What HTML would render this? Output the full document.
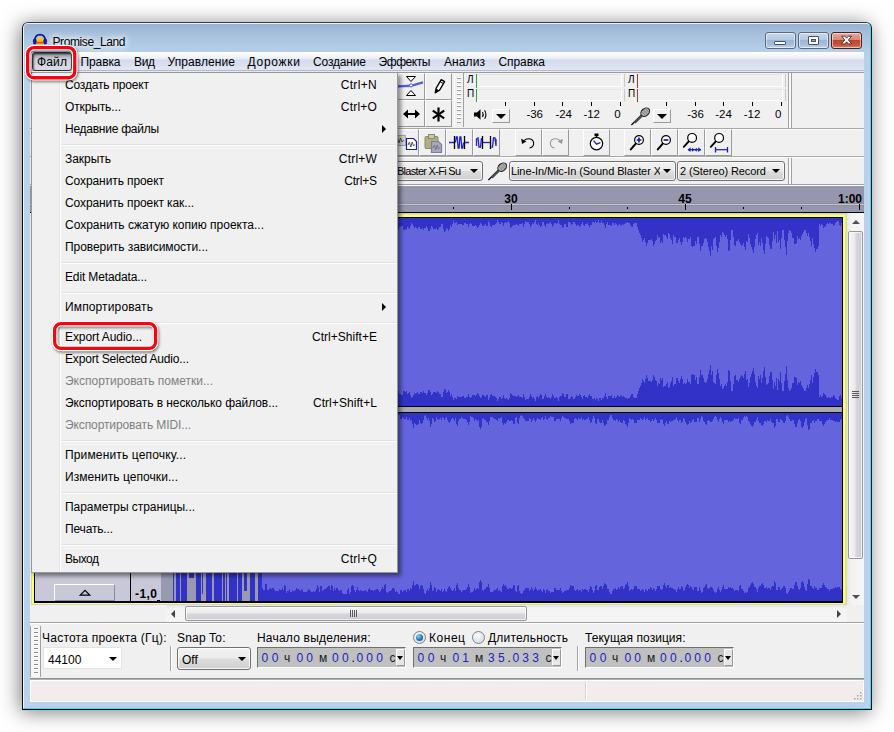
<!DOCTYPE html>
<html lang="ru"><head><meta charset="utf-8"><title>Promise_Land</title>
<style>
html,body{margin:0;padding:0;}
body{width:894px;height:732px;overflow:hidden;background:#fff;position:relative;font-family:"Liberation Sans",sans-serif;font-size:12px;color:#000;}
div,span,svg{position:absolute;box-sizing:border-box;}
.t{white-space:nowrap;}
.win{left:22px;top:22px;width:850px;height:688px;border:1px solid;border-color:#3a3d42 #0c0e12 #000 #0c0e12;border-radius:6px 6px 0 0;
 background:linear-gradient(#97b3d2 0px,#a8c2de 13px,#b7d0e9 29px,#b9d2eb 60px,#b9d2eb 100%);
 box-shadow:-2px 2px 20px 0 rgba(0,0,0,.52);}
.win:before{content:"";position:absolute;left:0;top:0;right:0;bottom:0;border:1px solid;border-color:rgba(255,255,255,.8) #3ad8f6 #3ad8f6 rgba(255,255,255,.8);border-radius:5px 5px 0 0;}
.client{left:30px;top:52px;width:834px;height:650px;background:#f0f0f0;}
.menubar{left:30px;top:52px;width:834px;height:21px;background:linear-gradient(#ffffff 0,#f3f5fb 4px,#e9ecf6 7px,#d5daec 8px,#e2e7f5 18px,#b6bacb 18px,#b6bacb 19px,#ededf1 19px,#ededf1 20px,#9c9c9c 20px);}
.mi{font-size:12px;}
.btn{background:#f0f0f0;border:1px solid;border-color:#fff #9a9a9a #9a9a9a #fff;}
.combo{border:1px solid #707070;border-radius:3px;background:linear-gradient(#f2f2f2,#ebebeb 48%,#dddddd 52%,#cfcfcf);box-shadow:inset 0 0 0 1px rgba(255,255,255,.8);}
.arr{width:0;height:0;border-left:4px solid transparent;border-right:4px solid transparent;border-top:4px solid #000;}
.sm{font-size:11px;}
.menu{background:#f0f0f0;border:1px solid #979797;box-shadow:3px 3px 4px rgba(0,0,0,.45);}
.sep{height:2px;border-top:1px solid #e0e0e0;border-bottom:1px solid #fff;}
.dis{color:#808080;}
.tc{background:#c0c0c0;border:1px solid;border-color:#6e6e6e #fff #fff #6e6e6e;}
.dg{color:#2222c4;font-size:12px;}
.un{color:#1a1a1a;font-size:12px;}
</style></head><body>
<div class="win"></div>
<svg style="left:32px;top:32px" width="16" height="16" viewBox="0 0 16 16">
<defs><linearGradient id="au" x1="0" y1="0" x2="0" y2="1"><stop offset="0" stop-color="#ffe400"/><stop offset=".5" stop-color="#ffb000"/><stop offset=".66" stop-color="#f02800"/><stop offset=".8" stop-color="#ffa800"/><stop offset="1" stop-color="#ffe000"/></linearGradient></defs>
<path d="M4.8 13.5 L4.8 8 Q4.8 6.2 5.8 6.4 Q6.4 4.9 7.2 6.2 Q8 4.6 8.8 6.2 Q9.6 4.9 10.2 6.4 Q11.2 6.2 11.2 8 L11.2 13.5 Z" fill="url(#au)"/>
<path d="M2.5 10 C2.3 4.6 5 2.6 8 2.6 C11 2.6 13.7 4.6 13.5 10" fill="none" stroke="#15158e" stroke-width="1.8"/>
<ellipse cx="2.8" cy="9.5" rx="1.9" ry="3.1" fill="#1a1aa6"/>
<ellipse cx="13.2" cy="9.5" rx="1.9" ry="3.1" fill="#1a1aa6"/>
</svg>
<span id="t1" class="t " style="top:34px;height:16px;line-height:16px;left:52.5px;letter-spacing:-0.399px;font-size:12px;text-shadow:0 0 5px #fff,0 0 8px #fff,0 0 10px rgba(255,255,255,.9);">Promise_Land</span>
<div style="left:765px;top:32px;width:31px;height:17px;border:1px solid #586880;border-radius:3px;background:linear-gradient(#c9d9ec 0,#b4c8e2 45%,#9bb5d6 50%,#a9c1de 80%,#c0d4ea 100%);box-shadow:inset 0 0 0 1px rgba(255,255,255,.55),0 0 1px rgba(255,255,255,.7);"></div>
<div style="left:798px;top:32px;width:31px;height:17px;border:1px solid #586880;border-radius:3px;background:linear-gradient(#c9d9ec 0,#b4c8e2 45%,#9bb5d6 50%,#a9c1de 80%,#c0d4ea 100%);box-shadow:inset 0 0 0 1px rgba(255,255,255,.55),0 0 1px rgba(255,255,255,.7);"></div>
<div style="left:831px;top:32px;width:31px;height:17px;border:1px solid #4a1e1a;border-radius:3px;background:linear-gradient(#e2a99c 0,#d4897a 45%,#c1432b 50%,#c8553a 80%,#d9825f 100%);box-shadow:inset 0 0 0 1px rgba(255,255,255,.55),0 0 1px rgba(255,255,255,.7);"></div>
<div style="left:774px;top:41px;width:12px;height:4px;background:#fff;border:1px solid #47525f;border-radius:1px;"></div>
<div style="left:808px;top:36px;width:11px;height:9px;background:#fff;border:1px solid #47525f;border-radius:1px;"></div>
<div style="left:811px;top:39px;width:5px;height:3px;background:#8ea6c6;border:1px solid #47525f;"></div>
<svg style="left:840px;top:35px" width="14" height="12" viewBox="0 0 14 12"><path d="M1.6 1.2 L4.9 1.2 L6.6 3.2 L8.3 1.2 L11.6 1.2 L8.4 5 L11.8 8.9 L8.4 8.9 L6.6 6.8 L4.8 8.9 L1.4 8.9 L4.8 5 Z" fill="#fff" stroke="#4b2a28" stroke-width="0.9"/></svg>
<div class="client"></div>
<div class="menubar"></div>
<div style="left:32px;top:52px;width:40px;height:19px;border:1px solid #333;border-radius:3px;background:linear-gradient(#77777c 0,#aeafb6 3px,#d0d1da 7px,#dadbe6 100%);box-shadow:inset 1px 1px 2px rgba(0,0,0,.55);"></div>
<span id="t2" class="t mi" style="top:54px;height:16px;line-height:16px;left:37px;letter-spacing:0.161px;">Файл</span>
<span id="t3" class="t mi" style="top:54px;height:16px;line-height:16px;left:80.5px;letter-spacing:-0.109px;">Правка</span>
<span id="t4" class="t mi" style="top:54px;height:16px;line-height:16px;left:134px;letter-spacing:-0.359px;">Вид</span>
<span id="t5" class="t mi" style="top:54px;height:16px;line-height:16px;left:167.5px;letter-spacing:0.087px;">Управление</span>
<span id="t6" class="t mi" style="top:54px;height:16px;line-height:16px;left:247.5px;letter-spacing:0.727px;">Дорожки</span>
<span id="t7" class="t mi" style="top:54px;height:16px;line-height:16px;left:313px;letter-spacing:-0.161px;">Создание</span>
<span id="t8" class="t mi" style="top:54px;height:16px;line-height:16px;left:378.5px;letter-spacing:-0.427px;">Эффекты</span>
<span id="t9" class="t mi" style="top:54px;height:16px;line-height:16px;left:444px;letter-spacing:0.097px;">Анализ</span>
<span id="t10" class="t mi" style="top:54px;height:16px;line-height:16px;left:498.5px;letter-spacing:-0.096px;">Справка</span>
<div class="" style="left:30px;top:128px;width:834px;height:1px;background:#a8a8a8;"></div>
<div class="" style="left:30px;top:129px;width:834px;height:1px;background:#fbfbfb;"></div>
<div class="" style="left:30px;top:156px;width:834px;height:1px;background:#a8a8a8;"></div>
<div class="" style="left:30px;top:157px;width:834px;height:1px;background:#fff;"></div>
<div class="" style="left:30px;top:184px;width:834px;height:1px;background:#a0a0a0;"></div>
<div class="" style="left:30px;top:185px;width:834px;height:1px;background:#fff;"></div>
<div class="btn" style="left:398px;top:73px;width:27px;height:27px;"></div>
<svg style="left:398px;top:73px" width="27" height="27" viewBox="0 0 27 27"><path d="M8.5 3.5 L17.5 3.5 L13 8.5 Z" fill="#fff" stroke="#000" stroke-width="1"/>
<path d="M8.5 22.5 L17.5 22.5 L13 17.5 Z" fill="#fff" stroke="#000" stroke-width="1"/>
<path d="M0 13.4 L13 12.8 L25 9.4" fill="none" stroke="#5a5ae0" stroke-width="2.4"/>
<circle cx="13" cy="12.4" r="1.6" fill="#fff" stroke="#5a5ae0" stroke-width="1"/></svg>
<div class="btn" style="left:425px;top:73px;width:27px;height:27px;"></div>
<svg style="left:425px;top:73px" width="27" height="27" viewBox="0 0 27 27"><path d="M10.2 19.8 L11.2 15.2 L16.2 6.6 L19.6 8.6 L14.6 17.2 Z" fill="#fff" stroke="#000" stroke-width="1.3" stroke-linejoin="round"/>
<path d="M15 8.6 L18.4 10.6" stroke="#000" stroke-width="1.1" fill="none"/>
<path d="M10 20.6 L11.1 15.6 L14.4 17.5 Z" fill="#000"/></svg>
<div class="btn" style="left:398px;top:100px;width:27px;height:27px;"></div>
<svg style="left:398px;top:100px" width="27" height="27" viewBox="0 0 27 27"><path d="M5 14 L10 9.6 L10 12.9 L17 12.9 L17 9.6 L22 14 L17 18.4 L17 15.1 L10 15.1 L10 18.4 Z" fill="#000"/></svg>
<div class="btn" style="left:425px;top:100px;width:27px;height:27px;"></div>
<svg style="left:425px;top:100px" width="27" height="27" viewBox="0 0 27 27"><g stroke="#000" stroke-width="2.2" stroke-linecap="butt"><path d="M13.5 7.5 L13.5 21.5"/><path d="M7.8 10.6 L19.2 18.4"/><path d="M19.2 10.6 L7.8 18.4"/></g></svg>
<div class="" style="left:454px;top:73px;width:1px;height:54px;background:#fff;"></div>
<div class="" style="left:463px;top:73px;width:1px;height:54px;background:#a0a0a0;"></div>
<div class="" style="left:454px;top:73px;width:10px;height:54px;"><div style="left:3px;top:4px;width:4px;height:1px;background:#fff;"></div><div style="left:3px;top:5px;width:4px;height:1px;background:#a0a0a0;"></div><div style="left:3px;top:8px;width:4px;height:1px;background:#fff;"></div><div style="left:3px;top:9px;width:4px;height:1px;background:#a0a0a0;"></div><div style="left:3px;top:12px;width:4px;height:1px;background:#fff;"></div><div style="left:3px;top:13px;width:4px;height:1px;background:#a0a0a0;"></div><div style="left:3px;top:16px;width:4px;height:1px;background:#fff;"></div><div style="left:3px;top:17px;width:4px;height:1px;background:#a0a0a0;"></div><div style="left:3px;top:20px;width:4px;height:1px;background:#fff;"></div><div style="left:3px;top:21px;width:4px;height:1px;background:#a0a0a0;"></div><div style="left:3px;top:24px;width:4px;height:1px;background:#fff;"></div><div style="left:3px;top:25px;width:4px;height:1px;background:#a0a0a0;"></div><div style="left:3px;top:28px;width:4px;height:1px;background:#fff;"></div><div style="left:3px;top:29px;width:4px;height:1px;background:#a0a0a0;"></div><div style="left:3px;top:32px;width:4px;height:1px;background:#fff;"></div><div style="left:3px;top:33px;width:4px;height:1px;background:#a0a0a0;"></div><div style="left:3px;top:36px;width:4px;height:1px;background:#fff;"></div><div style="left:3px;top:37px;width:4px;height:1px;background:#a0a0a0;"></div><div style="left:3px;top:40px;width:4px;height:1px;background:#fff;"></div><div style="left:3px;top:41px;width:4px;height:1px;background:#a0a0a0;"></div><div style="left:3px;top:44px;width:4px;height:1px;background:#fff;"></div><div style="left:3px;top:45px;width:4px;height:1px;background:#a0a0a0;"></div><div style="left:3px;top:48px;width:4px;height:1px;background:#fff;"></div><div style="left:3px;top:49px;width:4px;height:1px;background:#a0a0a0;"></div></div>
<div class="" style="left:476px;top:74px;width:146px;height:13px;background:#f0f0f0;border-bottom:1px solid #fff;border-right:1px solid #fff;border-top:1px solid #e4e4e4;"></div>
<div class="" style="left:476px;top:74px;width:1px;height:14px;background:#30a030;"></div>
<div class="" style="left:624px;top:74px;width:1px;height:13px;background:#c8c8c8;"></div>
<div class="" style="left:476px;top:89px;width:146px;height:12px;background:#f0f0f0;border-bottom:1px solid #fff;border-right:1px solid #fff;border-top:1px solid #e4e4e4;"></div>
<div class="" style="left:476px;top:89px;width:1px;height:13px;background:#30a030;"></div>
<div class="" style="left:624px;top:89px;width:1px;height:12px;background:#c8c8c8;"></div>
<span id="t11" class="t " style="top:72px;height:16px;line-height:16px;left:467px;font-size:10px;">Л</span>
<span id="t12" class="t " style="top:86px;height:16px;line-height:16px;left:467px;font-size:10px;">П</span>
<div class="" style="left:505px;top:102px;width:1px;height:4px;background:#000;"></div>
<div class="" style="left:534px;top:102px;width:1px;height:4px;background:#000;"></div>
<div class="" style="left:562px;top:102px;width:1px;height:4px;background:#000;"></div>
<div class="" style="left:591px;top:102px;width:1px;height:4px;background:#000;"></div>
<div class="" style="left:620px;top:102px;width:1px;height:4px;background:#000;"></div>
<span id="t13" class="t " style="top:106px;height:16px;line-height:16px;left:534.7px;font-size:11.5px;width:40px;margin-left:-20px;text-align:center;">-36</span>
<span id="t14" class="t " style="top:106px;height:16px;line-height:16px;left:563.7px;font-size:11.5px;width:40px;margin-left:-20px;text-align:center;">-24</span>
<span id="t15" class="t " style="top:106px;height:16px;line-height:16px;left:591.7px;font-size:11.5px;width:40px;margin-left:-20px;text-align:center;">-12</span>
<span id="t16" class="t " style="top:106px;height:16px;line-height:16px;left:617.5px;font-size:11.5px;width:40px;margin-left:-20px;text-align:center;">0</span>
<svg style="left:472px;top:107px" width="17" height="15" viewBox="0 0 17 15"><path d="M2 5.5 L5 5.5 L8.5 2.2 L8.5 12.8 L5 9.5 L2 9.5 Z" fill="#000"/><path d="M10.5 5 Q12 7.5 10.5 10" fill="none" stroke="#000" stroke-width="1.1"/><path d="M12.6 3.2 Q15.2 7.5 12.6 11.8" fill="none" stroke="#000" stroke-width="1.1"/></svg>
<div class="btn" style="left:492px;top:109px;width:18px;height:14px;"></div>
<div class="arr" style="left:496px;top:114px;border-left-width:5px;border-right-width:5px;border-top-width:5px;"></div>
<div class="" style="left:637px;top:74px;width:146px;height:13px;background:#f0f0f0;border-bottom:1px solid #fff;border-right:1px solid #fff;border-top:1px solid #e4e4e4;"></div>
<div class="" style="left:637px;top:74px;width:1px;height:14px;background:#b03030;"></div>
<div class="" style="left:785px;top:74px;width:1px;height:13px;background:#c8c8c8;"></div>
<div class="" style="left:637px;top:89px;width:146px;height:12px;background:#f0f0f0;border-bottom:1px solid #fff;border-right:1px solid #fff;border-top:1px solid #e4e4e4;"></div>
<div class="" style="left:637px;top:89px;width:1px;height:13px;background:#b03030;"></div>
<div class="" style="left:785px;top:89px;width:1px;height:12px;background:#c8c8c8;"></div>
<span id="t17" class="t " style="top:72px;height:16px;line-height:16px;left:628px;font-size:10px;">Л</span>
<span id="t18" class="t " style="top:86px;height:16px;line-height:16px;left:628px;font-size:10px;">П</span>
<div class="" style="left:666px;top:102px;width:1px;height:4px;background:#000;"></div>
<div class="" style="left:695px;top:102px;width:1px;height:4px;background:#000;"></div>
<div class="" style="left:723px;top:102px;width:1px;height:4px;background:#000;"></div>
<div class="" style="left:752px;top:102px;width:1px;height:4px;background:#000;"></div>
<div class="" style="left:781px;top:102px;width:1px;height:4px;background:#000;"></div>
<span id="t19" class="t " style="top:106px;height:16px;line-height:16px;left:695.5px;font-size:11.5px;width:40px;margin-left:-20px;text-align:center;">-36</span>
<span id="t20" class="t " style="top:106px;height:16px;line-height:16px;left:723.5px;font-size:11.5px;width:40px;margin-left:-20px;text-align:center;">-24</span>
<span id="t21" class="t " style="top:106px;height:16px;line-height:16px;left:752px;font-size:11.5px;width:40px;margin-left:-20px;text-align:center;">-12</span>
<span id="t22" class="t " style="top:106px;height:16px;line-height:16px;left:778.3px;font-size:11.5px;width:40px;margin-left:-20px;text-align:center;">0</span>
<svg style="left:629px;top:105px" width="22" height="22" viewBox="0 0 22 22"><path d="M2.4 20 L12.5 10.2" stroke="#000" stroke-width="1.2" fill="none"/><path d="M5.6 17.6 L12.6 10.8" stroke="#4a4a4a" stroke-width="2.6" fill="none"/><ellipse cx="16.2" cy="7.2" rx="4.9" ry="3.6" transform="rotate(-42 16.2 7.2)" fill="#b4b4b4" stroke="#222" stroke-width="1.1"/><path d="M13.2 6.8 L16.6 10.4 M14.8 5.2 L18.4 8.8 M16.6 4 L19.6 7" stroke="#666" stroke-width="0.8" fill="none"/></svg>
<div class="btn" style="left:653px;top:109px;width:18px;height:14px;"></div>
<div class="arr" style="left:657px;top:114px;border-left-width:5px;border-right-width:5px;border-top-width:5px;"></div>
<div class="" style="left:788px;top:73px;width:1px;height:55px;background:#a0a0a0;"></div>
<div class="" style="left:789px;top:73px;width:2px;height:55px;background:#fafafa;"></div>
<div class="" style="left:791px;top:73px;width:1px;height:55px;background:#a0a0a0;"></div>
<div class="" style="left:788px;top:158px;width:1px;height:26px;background:#a0a0a0;"></div>
<div class="" style="left:789px;top:158px;width:2px;height:26px;background:#fafafa;"></div>
<div class="" style="left:791px;top:158px;width:1px;height:26px;background:#a0a0a0;"></div>
<div class="btn" style="left:392px;top:129px;width:27px;height:27px;"></div>
<svg style="left:392px;top:129px" width="27" height="27" viewBox="0 0 27 27"><rect x="2.5" y="6.5" width="11" height="10" fill="#d4d4d4" stroke="#6a6a6a" stroke-dasharray="1 1"/><path d="M4 12 l1.5 -3 l1.5 5 l1.5 -5 l1.5 4 l1.5 -2" stroke="#555" fill="none"/><path d="M14.5 9.5 L21.5 9.5 L24.5 12.5 L24.5 20.5 L14.5 20.5 Z" fill="#fff" stroke="#1818b8" stroke-width="1.2"/><path d="M16 16 l1.4 -3 l1.4 5 l1.4 -5 l1.4 4 l1.2 -1.5" stroke="#555" fill="none"/></svg>
<div class="btn" style="left:419px;top:129px;width:27px;height:27px;"></div>
<svg style="left:419px;top:129px" width="27" height="27" viewBox="0 0 27 27"><rect x="6" y="7.5" width="13" height="12" rx="1" fill="#b0ae82" stroke="#8c8a66"/><rect x="9.5" y="5.5" width="6" height="4" fill="#c8c8b0" stroke="#8c8a66"/><path d="M12.5 12.5 L19.5 12.5 L22.5 15.5 L22.5 23.5 L12.5 23.5 Z" fill="#a8a8b8" stroke="#7c7ca8" stroke-width="1.2"/><path d="M14 19 l1.4 -3 l1.4 5 l1.4 -5 l1.4 4 l1.2 -1.5" stroke="#77778a" fill="none"/></svg>
<div class="btn" style="left:446px;top:129px;width:27px;height:27px;"></div>
<svg style="left:446px;top:129px" width="27" height="27" viewBox="0 0 27 27"><path d="M3 13.5 L8 13.5 M19 13.5 L23 13.5" stroke="#2020d0" stroke-width="1.3"/><path d="M8.5 7 L8.5 20 M18.5 7 L18.5 20" stroke="#000" stroke-width="1.3"/><path d="M9.5 13.5 L10.3 8 L11.3 8 L12.1 19 L13.1 19 L13.9 8 L14.9 8 L15.7 19 L16.7 19 L17.5 13.5" stroke="#2020d0" stroke-width="1.3" fill="none"/></svg>
<div class="btn" style="left:473px;top:129px;width:27px;height:27px;"></div>
<svg style="left:473px;top:129px" width="27" height="27" viewBox="0 0 27 27"><path d="M10 13.5 L17 13.5" stroke="#2020d0" stroke-width="1.3"/><path d="M9.5 7 L9.5 20 M17.5 7 L17.5 20" stroke="#000" stroke-width="1.3"/><path d="M3.5 17 L3.5 10 L5 9 L6 18 L7.5 18 L8.5 9" stroke="#2020d0" stroke-width="1.3" fill="none"/><path d="M18.5 18 L19.5 18 L20.5 9 L22 9 L23 17 L23 10" stroke="#2020d0" stroke-width="1.3" fill="none"/></svg>
<div class="btn" style="left:515px;top:129px;width:27px;height:27px;"></div>
<svg style="left:515px;top:129px" width="27" height="27" viewBox="0 0 27 27"><path d="M8.2 13.2 C10 8.6 17.6 8.4 18.6 13.6 C19.2 17 16.6 18.8 14.6 18.9" fill="none" stroke="#000" stroke-width="1.1"/><path d="M6.2 9.8 L7 15 L11.4 12.6 Z" fill="#000"/></svg>
<div class="btn" style="left:542px;top:129px;width:27px;height:27px;"></div>
<svg style="left:542px;top:129px" width="27" height="27" viewBox="0 0 27 27"><path d="M18.8 13.2 C17 8.6 9.4 8.4 8.4 13.6 C7.8 17 10.4 18.8 12.4 18.9" fill="none" stroke="#9a9a9a" stroke-width="1.1"/><path d="M20.8 9.8 L20 15 L15.6 12.6 Z" fill="#9a9a9a"/></svg>
<div class="btn" style="left:583px;top:129px;width:27px;height:27px;"></div>
<svg style="left:583px;top:129px" width="27" height="27" viewBox="0 0 27 27"><circle cx="13.5" cy="14.6" r="6.2" fill="#fff" stroke="#000" stroke-width="1.2"/><rect x="11.5" y="4.5" width="4" height="2.6" fill="#000"/><path d="M13.5 7 L13.5 9" stroke="#000" stroke-width="1.4"/><path d="M10.6 11.6 L13.5 15.2 L17.4 13.6" fill="none" stroke="#2020c0" stroke-width="1.4"/></svg>
<div class="btn" style="left:624px;top:129px;width:27px;height:27px;"></div>
<svg style="left:624px;top:129px" width="27" height="27" viewBox="0 0 27 27"><path d="M6.8 20.4 L11.8 14.6" stroke="#000" stroke-width="2" stroke-linecap="round"/><circle cx="15" cy="11" r="4.4" fill="#fff" stroke="#000" stroke-width="1.2"/><path d="M12.6 11 L17.4 11 M15 8.6 L15 13.4" stroke="#1818c0" stroke-width="1.7"/></svg>
<div class="btn" style="left:651px;top:129px;width:27px;height:27px;"></div>
<svg style="left:651px;top:129px" width="27" height="27" viewBox="0 0 27 27"><path d="M6.8 20.4 L11.8 14.6" stroke="#000" stroke-width="2" stroke-linecap="round"/><circle cx="15" cy="11" r="4.4" fill="#fff" stroke="#000" stroke-width="1.2"/><path d="M12.6 11 L17.4 11" stroke="#1818c0" stroke-width="1.7"/></svg>
<div class="btn" style="left:678px;top:129px;width:27px;height:27px;"></div>
<svg style="left:678px;top:129px" width="27" height="27" viewBox="0 0 27 27"><path d="M5.8 17.8 L11 12.2" stroke="#000" stroke-width="1.9" stroke-linecap="round"/><circle cx="14.1" cy="8.9" r="4.4" fill="#fff" stroke="#000" stroke-width="1.2"/><path d="M10 20.7 L23 20.7" stroke="#1818c0" stroke-width="1.2"/><path d="M9.6 20.7 l3 -2.4 l0 4.8 Z M23.2 20.7 l-3 -2.4 l0 4.8 Z M16.4 20.7 l-2.4 -2 l0 4 Z M16.4 20.7 l2.4 -2 l0 4 Z" fill="#1818c0"/></svg>
<div class="btn" style="left:705px;top:129px;width:27px;height:27px;"></div>
<svg style="left:705px;top:129px" width="27" height="27" viewBox="0 0 27 27"><path d="M5.8 17.8 L11 12.2" stroke="#000" stroke-width="1.9" stroke-linecap="round"/><circle cx="14.1" cy="8.9" r="4.4" fill="#fff" stroke="#000" stroke-width="1.2"/><path d="M10.5 20.7 L22.5 20.7" stroke="#1818c0" stroke-width="1.2"/><path d="M10.5 18 L10.5 23.4 M22.5 18 L22.5 23.4" stroke="#1818c0" stroke-width="1.3"/></svg>
<div class="combo" style="left:330px;top:161px;width:153px;height:20px;"></div>
<div class="arr" style="left:470px;top:169px;"></div>
<span id="t23" class="t sm" style="top:163px;height:16px;line-height:16px;left:397px;letter-spacing:-0.712px;overflow:hidden;width:65px;">Blaster X-Fi Su</span>
<svg style="left:486px;top:160px" width="22" height="22" viewBox="0 0 22 22"><path d="M2.4 20 L12.5 10.2" stroke="#000" stroke-width="1.2" fill="none"/><path d="M5.6 17.6 L12.6 10.8" stroke="#4a4a4a" stroke-width="2.6" fill="none"/><ellipse cx="16.2" cy="7.2" rx="4.9" ry="3.6" transform="rotate(-42 16.2 7.2)" fill="#b4b4b4" stroke="#222" stroke-width="1.1"/><path d="M13.2 6.8 L16.6 10.4 M14.8 5.2 L18.4 8.8 M16.6 4 L19.6 7" stroke="#666" stroke-width="0.8" fill="none"/></svg>
<div class="combo" style="left:509px;top:161px;width:167px;height:20px;"></div>
<div class="arr" style="left:663px;top:169px;"></div>
<span id="t24" class="t sm" style="top:163px;height:16px;line-height:16px;left:511px;letter-spacing:-0.095px;overflow:hidden;width:149px;">Line-In/Mic-In (Sound Blaster X</span>
<div class="combo" style="left:677px;top:161px;width:108px;height:20px;"></div>
<div class="arr" style="left:772px;top:169px;"></div>
<span id="t25" class="t sm" style="top:163px;height:16px;line-height:16px;left:680px;letter-spacing:-0.090px;">2 (Stereo) Record</span>
<div class="" style="left:30px;top:186px;width:834px;height:26px;background:#9696af;"></div>
<div class="" style="left:30px;top:203px;width:834px;height:3px;background:#c6c6c8;border-top:1px solid #8a8aa0;border-bottom:1px solid #8a8aa0;"></div>
<div class="" style="left:30px;top:212px;width:834px;height:1px;background:#000;"></div>
<div class="" style="left:163px;top:204px;width:1px;height:6px;background:#000;"></div>
<div class="" style="left:221px;top:207px;width:1px;height:2px;background:#000;"></div>
<div class="" style="left:279px;top:207px;width:1px;height:2px;background:#000;"></div>
<div class="" style="left:337px;top:204px;width:1px;height:6px;background:#000;"></div>
<div class="" style="left:395px;top:207px;width:1px;height:2px;background:#000;"></div>
<div class="" style="left:453px;top:207px;width:1px;height:2px;background:#000;"></div>
<div class="" style="left:511px;top:204px;width:1px;height:6px;background:#000;"></div>
<div class="" style="left:569px;top:207px;width:1px;height:2px;background:#000;"></div>
<div class="" style="left:627px;top:207px;width:1px;height:2px;background:#000;"></div>
<div class="" style="left:685px;top:204px;width:1px;height:6px;background:#000;"></div>
<div class="" style="left:743px;top:207px;width:1px;height:2px;background:#000;"></div>
<div class="" style="left:801px;top:207px;width:1px;height:2px;background:#000;"></div>
<div class="" style="left:859px;top:204px;width:1px;height:6px;background:#000;"></div>
<span id="t26" class="t " style="top:191px;height:16px;line-height:16px;left:511px;font-weight:bold;font-size:12px;width:40px;margin-left:-20px;text-align:center;">30</span>
<span id="t27" class="t " style="top:191px;height:16px;line-height:16px;left:685px;font-weight:bold;font-size:12px;width:40px;margin-left:-20px;text-align:center;">45</span>
<span id="t28" class="t " style="top:191px;height:16px;line-height:16px;left:337px;font-weight:bold;font-size:12px;width:40px;margin-left:-20px;text-align:center;">15</span>
<span id="t29" class="t " style="top:191px;height:16px;line-height:16px;left:163px;font-weight:bold;font-size:12px;width:40px;margin-left:-20px;text-align:center;">0</span>
<span id="t30" class="t " style="top:191px;height:16px;line-height:16px;right:32px;font-weight:bold;font-size:12px;">1:00</span>
<div class="" style="left:31px;top:213px;width:816px;height:392px;background:#d6d6b2;"></div>
<div class="" style="left:32px;top:214px;width:814px;height:390px;background:#e6e69a;"></div>
<div class="" style="left:32px;top:215px;width:813px;height:389px;background:#ffff66;"></div>
<div class="" style="left:34px;top:217px;width:809px;height:386px;background:#000;"></div>
<div class="" style="left:35px;top:218px;width:95px;height:383px;background:#c8c8d8;"></div>
<div class="" style="left:131px;top:218px;width:30px;height:383px;background:#c8c8d8;"></div>
<div class="" style="left:161px;top:218px;width:681px;height:383px;background:#9999b1;"></div>
<svg style="left:161px;top:218px" width="681" height="188" viewBox="0 0 681 188" shape-rendering="crispEdges"><path fill="#3232c8" d="M12 19h3v149h-3zM16 0h6v188h-6zM23 0h3v188h-3zM29 0h3v188h-3zM34 8h6v172h-6zM42 8h3v172h-3zM47 19h8v149h-8zM58 15h3v157h-3zM62 0h6v188h-6zM69 0h4v188h-4zM75 0h3v188h-3zM81 0h1v188h-1zM84 0h4v188h-4zM90 13h8v162h-8z"/><rect x="101" y="0" width="580" height="188" fill="#3232c8"/><path fill="#6464dc" d="M101 10h1V13h1V10h1V9h1V10h1V8h1V11h1V13h1V9h1V6h1V8h1V10h1V11h1V12h1V11h1V8h1V6h1V7h1h1V10h1V11h1V10h1V12h1V10h1V8h1V7h1V8h1h1h1V12h1h1V9h1V6h1V8h1h1V6h1V8h1V10h1V11h1V10h1V9h1h1V10h1V11h1V10h1h1h1V8h1V9h1V8h1V9h1V10h1V8h1V7h1h1V9h1V10h1h1h1V9h1V7h1V9h1V12h1V13h1h1V9h1V8h1V11h1V10h1h1h1V8h1V10h1V14h1V10h1V9h1V10h1V9h1h1h1V8h1V9h1V11h1V10h1V8h1V10h1V11h1V12h1h1V11h1V10h1h1V9h1V6h1h1V8h1V11h1V9h1V8h1V10h1V11h1V8h1V6h1V5h1h1V7h1h1V9h1V11h1V9h1V10h1V11h1V12h1V10h1V9h1h1V7h1h1V10h1V12h1V13h1V11h1h1V8h1V7h1V8h1V10h1V8h1V7h1V8h1V10h1V12h1V11h1V8h1V10h1V13h1V12h1V9h1h1V8h1h1V12h1h1V11h1V12h1V9h1V10h1V11h1V8h1V5h1V6h1V8h1V10h1V9h1V10h1V11h1V9h1h1V11h1h1V10h1V12h1V10h1h1V8h1V10h1V13h1h1V11h1V8h1V9h1V11h1h1h1V10h1V12h1V11h1V9h1h1V6h1h1V11h1V14h1V13h1V10h1V11h1V13h1V11h1V7h1V9h1V6h1V3h1V5h1h1V4h1V7h1V6h1h1h1h1V7h1h1V5h1h1V6h1h1V9h1V6h1V5h1V6h1V8h1h1h1V7h1V8h1V10h1V9h1V7h1V5h1V6h1V8h1h1V7h1V6h1V8h1h1V3h1V5h1V8h1V9h1V7h1h1h1V6h1V5h1V2h1V4h1V6h1h1V4h1V5h1V8h1V5h1V4h1V5h1V4h1V3h1V5h1V10h1V9h1V8h1V7h1h1h1V6h1V7h1V8h1V6h1h1h1V5h1V9h1V6h1V3h1V4h1h1h1V6h1V9h1V7h1V5h1V6h1V4h1V2h1V6h1V7h1V5h1V7h1V9h1V8h1V4h1h1V7h1V9h1V6h1V5h1V6h1V5h1V4h1V6h1V9h1V7h1V5h1h1V6h1V5h1V2h1V6h1V7h1h1V10h1V9h1V6h1h1V9h1h1V4h1h1V5h1V7h1V6h1V4h1h1V6h1V8h1V7h1h1V9h1V8h1V6h1V4h1V7h1V8h1V6h1h1V5h1V7h1V9h1V7h1h1V4h1h1V5h1V3h1V5h1V4h1V2h1V5h1h1V3h1V5h1h1V7h1V10h1V6h1V4h1V7h1h1h1V8h1V5h1h1V7h1V5h1V6h1V8h1V7h1V6h1V7h1V8h1V6h1V7h1V6h1V5h1h1V4h1V5h1h1V7h1V9h1h1V6h1V5h1h1h1V9h1V12h1V15h1V17h1V20h1V24h1V22h1V20h1V24h1V28h1V25h1V22h1h1h1V21h1V23h1V28h1V26h1V23h1V22h1V17h1V20h1V19h1V25h1V23h1V25h1V16h1V17h1h1V19h1V21h1V15h1V16h1V20h1V22h1V26h1V17h1V19h1h1V25h1h1V22h1V20h1V24h1V27h1V24h1V19h1V20h1V19h1V20h1V24h1V21h1h1V19h1V28h1V29h1V28h1h1V23h1V26h1V19h1h1V26h1V33h1V28h1h1V25h1V21h1V20h1V21h1V24h1V29h1V33h1V38h1V28h1V32h1V21h1V20h1V19h1V28h1V34h1V30h1V24h1V17h1V19h1V14h1V15h1V17h1V19h1V17h1V21h1V33h1V32h1V22h1V12h1h1V19h1V27h1V28h1V23h1h1V21h1V24h1V26h1V28h1V27h1V25h1V29h1V32h1V23h1V24h1V16h1V20h1V26h1V29h1V32h1V35h1V29h1V21h1V17h1V15h1V27h1V24h1V28h1V20h1V25h1V32h1V36h1V26h1V18h1V19h1V20h1V27h1V31h1h1V23h1V14h1V21h1V17h1V25h1V13h1V24h1V22h1V31h1V20h1V12h1h1V22h1V29h1V37h1V23h1V15h1V12h1V13h1V15h1V20h1h1V26h1h1V25h1V18h1V21h1V20h1V22h1V18h1V16h1V14h1V12h1h1V15h1V18h1V15h1V19h1V23h1V28h1V20h1V26h1V30h1V34h1V31h1h1V28h1V6h1V8h1V6h1V7h1V10h1V9h1V8h1V6h1V5h1V6h1V5h1h1V6h1h1V8h1V7h1V5h1V4h1V3h1h1V7h1V8h1V5h1V180h-1V177h-1V178h-1V182h-1h-1V181h-1V180h-1V178h-1V177h-1V179h-1h-1V180h-1h-1V179h-1V180h-1V179h-1V177h-1V176h-1V175h-1V178h-1V179h-1V177h-1V179h-1V157h-1V154h-1h-1V151h-1V155h-1V159h-1V165h-1V157h-1V162h-1V166h-1V170h-1V167h-1V170h-1V173h-1h-1V171h-1V169h-1V167h-1V163h-1V165h-1V164h-1V167h-1V160h-1V159h-1h-1V165h-1h-1V170h-1V172h-1V173h-1V170h-1V162h-1V148h-1V156h-1V163h-1V173h-1h-1V165h-1V154h-1V163h-1V161h-1V172h-1V160h-1V168h-1V164h-1V171h-1V162h-1V154h-1h-1V158h-1V165h-1V166h-1V167h-1V159h-1V149h-1V153h-1V160h-1V165h-1V157h-1V161h-1V158h-1V170h-1V168h-1V164h-1V156h-1V150h-1V153h-1V156h-1V159h-1V165h-1V169h-1V161h-1V162h-1V153h-1V156h-1V160h-1V158h-1V157h-1V159h-1V161h-1V164h-1V162h-1h-1V157h-1V158h-1V166h-1V173h-1h-1V163h-1V153h-1V152h-1V164h-1V168h-1V166h-1V168h-1V170h-1V171h-1V166h-1V168h-1V161h-1V155h-1V151h-1V157h-1V166h-1V165h-1V164h-1V153h-1V157h-1V147h-1V152h-1V156h-1V161h-1V164h-1V165h-1V164h-1V160h-1V157h-1h-1V152h-1V159h-1V166h-1h-1V159h-1V162h-1V157h-1h-1V156h-1V157h-1V166h-1V164h-1h-1V161h-1V165h-1V166h-1V165h-1V166h-1V161h-1V158h-1V161h-1V165h-1V163h-1V160h-1h-1V166h-1h-1V168h-1V159h-1V163h-1V165h-1V169h-1V170h-1V164h-1V166h-1V168h-1h-1V169h-1V160h-1V162h-1V160h-1V166h-1V165h-1V168h-1V163h-1V162h-1V159h-1V157h-1V162h-1V164h-1V163h-1h-1h-1V160h-1V157h-1V161h-1V165h-1V163h-1V161h-1V165h-1V168h-1V170h-1V173h-1V176h-1V180h-1h-1h-1V179h-1V176h-1h-1V178h-1V180h-1h-1V181h-1V180h-1h-1V179h-1V178h-1V179h-1V177h-1V178h-1V179h-1V178h-1V177h-1V179h-1V180h-1V178h-1V180h-1h-1V177h-1V178h-1h-1h-1V181h-1V179h-1V175h-1V178h-1V180h-1h-1V182h-1V180h-1h-1V183h-1V181h-1V180h-1V182h-1V180h-1V181h-1h-1V178h-1h-1V176h-1V178h-1V180h-1V179h-1h-1V177h-1V178h-1V181h-1V179h-1V177h-1V176h-1V178h-1h-1V177h-1V179h-1V181h-1h-1V179h-1V178h-1V180h-1V181h-1h-1V176h-1h-1V179h-1h-1V176h-1V175h-1V178h-1h-1V179h-1V183h-1V180h-1V179h-1V180h-1h-1V178h-1V176h-1V179h-1V181h-1V180h-1V179h-1V180h-1V179h-1V176h-1V178h-1V181h-1h-1V177h-1V176h-1V178h-1V180h-1V178h-1V179h-1V183h-1V181h-1V179h-1V180h-1V178h-1V176h-1V179h-1V181h-1h-1h-1V182h-1V179h-1V176h-1V180h-1V179h-1h-1h-1V177h-1V178h-1V179h-1V178h-1h-1h-1V177h-1V176h-1V175h-1V180h-1V182h-1V181h-1V180h-1V181h-1V180h-1V177h-1V180h-1V181h-1V179h-1h-1V181h-1V183h-1V180h-1V179h-1V178h-1h-1h-1V176h-1V177h-1V180h-1V182h-1V177h-1h-1V179h-1V178h-1V177h-1h-1V179h-1V180h-1V178h-1V176h-1V175h-1V177h-1V178h-1V177h-1h-1h-1V179h-1V180h-1V179h-1V176h-1V179h-1h-1V180h-1h-1V178h-1h-1V179h-1h-1h-1h-1V178h-1V181h-1V180h-1h-1V182h-1V179h-1V176h-1V178h-1V174h-1V172h-1V174h-1V175h-1V172h-1V171h-1V174h-1V179h-1h-1V176h-1h-1V174h-1V173h-1V175h-1V174h-1h-1h-1V176h-1V177h-1V174h-1V172h-1h-1V175h-1V177h-1V175h-1h-1V173h-1V175h-1V174h-1h-1V176h-1h-1V174h-1V175h-1V176h-1V175h-1V177h-1V179h-1V180h-1V177h-1V174h-1V175h-1V176h-1V173h-1V174h-1V173h-1h-1V177h-1h-1V176h-1h-1V173h-1V172h-1V175h-1V177h-1V174h-1V173h-1V175h-1V177h-1V178h-1V177h-1V175h-1V177h-1V178h-1V177h-1V174h-1h-1V172h-1V173h-1V175h-1V178h-1h-1V176h-1h-1V175h-1V173h-1V174h-1V175h-1V176h-1V174h-1V176h-1V178h-1h-1V180h-1h-1V179h-1V177h-1V174h-1V175h-1V177h-1V176h-1V174h-1V177h-1V179h-1h-1V176h-1V175h-1h-1V174h-1V173h-1h-1V174h-1V175h-1V177h-1V175h-1V174h-1V176h-1V177h-1V176h-1h-1h-1V175h-1V176h-1V175h-1V171h-1V175h-1V177h-1V175h-1h-1h-1V174h-1V177h-1V176h-1V172h-1h-1V173h-1V176h-1V178h-1V176h-1V175h-1h-1h-1V176h-1V178h-1h-1V177h-1V175h-1V176h-1V177h-1V176h-1V177h-1V175h-1h-1h-1V174h-1V175h-1V176h-1h-1V175h-1V174h-1V175h-1V177h-1V179h-1V177h-1h-1V179h-1V176h-1V173h-1h-1V177h-1h-1h-1V178h-1V177h-1V175h-1V173h-1V175h-1V174h-1V175h-1V178h-1h-1V179h-1V177h-1V174h-1V173h-1V174h-1V175h-1V177h-1V179h-1V176h-1V172h-1V174h-1V177h-1V175h-1V176h-1V175h-1V172h-1V175h-1z"/></svg>
<svg style="left:161px;top:413px" width="681" height="188" viewBox="0 0 681 188" shape-rendering="crispEdges"><path fill="#3232c8" d="M12 0h1v188h-1zM15 0h4v188h-4zM20 0h6v188h-6zM28 24h5v141h-5zM35 0h5v188h-5zM41 6h1v175h-1zM45 0h6v188h-6zM53 0h8v188h-8zM62 0h2v188h-2zM65 0h1v188h-1zM68 0h8v188h-8zM77 0h4v188h-4zM83 10h3v168h-3zM89 0h5v188h-5zM97 0h6v188h-6z"/><rect x="101" y="0" width="580" height="188" fill="#3232c8"/><path fill="#6464dc" d="M101 8h1V6h1h1V12h1h1V6h1h1V7h1V8h1V7h1V8h1h1V6h1V5h1h1h1h1V7h1V6h1h1V8h1V6h1V11h1V10h1V3h1V5h1h1V7h1V4h1h1V6h1V5h1h1V6h1V8h1V7h1h1V6h1V5h1V7h1V6h1V4h1h1h1h1V5h1V7h1V6h1V5h1V4h1h1V5h1V4h1V5h1V7h1V11h1V9h1V4h1V10h1h1V5h1V6h1V7h1h1V8h1V9h1V10h1h1V6h1V11h1V10h1V5h1V8h1V6h1V8h1h1V6h1V5h1V6h1h1V3h1V2h1h1h1h1V6h1V8h1V2h1V4h1V10h1V11h1V10h1V6h1V4h1V6h1V9h1V6h1V5h1V6h1V5h1h1h1h1V6h1V5h1V4h1V7h1V8h1V6h1h1h1V5h1V6h1h1V7h1h1V6h1V4h1V5h1V7h1V9h1V7h1V11h1V12h1V4h1V3h1V4h1V5h1h1V6h1V8h1h1V7h1V4h1V5h1V4h1V2h1h1V6h1h1V4h1V5h1V6h1h1V4h1V7h1h1V5h1V8h1V7h1V11h1V15h1V10h1V11h1V12h1h1V11h1V7h1V10h1V11h1V10h1V7h1V3h1V2h1V5h1V7h1V5h1V8h1V14h1V11h1V5h1V6h1V9h1V8h1V4h1V6h1V7h1V6h1V5h1V7h1V4h1V5h1V7h1V5h1V4h1V7h1V9h1V10h1V8h1V6h1V5h1V6h1V8h1V5h1V11h1V13h1V8h1V6h1h1V4h1V5h1V6h1h1h1V7h1V9h1V12h1V9h1V3h1V4h1h1V5h1V8h1V6h1V7h1V8h1V7h1V14h1V16h1V14h1V6h1V5h1V7h1h1V9h1h1V12h1V8h1V4h1h1h1V5h1V6h1h1V7h1V8h1V5h1V6h1V5h1V4h1V10h1V12h1V10h1V11h1V9h1V7h1h1V8h1h1V7h1V8h1V11h1h1V5h1V4h1V10h1V11h1V5h1V3h1V2h1V3h1V5h1V6h1V8h1h1h1h1V5h1V6h1V9h1V7h1V5h1V7h1V9h1V7h1V5h1V6h1h1V7h1V5h1V4h1V7h1V6h1V3h1V6h1V7h1V5h1h1V3h1V4h1h1h1V8h1h1V6h1h1h1h1V8h1V5h1V3h1V4h1V5h1h1V6h1h1h1V8h1V11h1V10h1h1h1V6h1V5h1V6h1V7h1V5h1V6h1h1V4h1V7h1V6h1V7h1h1V6h1h1V4h1V7h1V10h1V9h1V6h1V3h1V5h1V10h1V11h1V6h1h1V9h1V10h1h1V7h1V10h1V13h1V12h1V11h1V7h1h1V4h1V2h1h1V5h1V7h1h1V8h1V6h1V7h1V9h1V7h1V9h1V10h1h1V7h1V8h1V11h1V12h1V14h1V10h1V5h1V6h1V7h1V6h1V7h1V10h1h1h1V7h1h1h1V5h1V6h1V7h1V6h1V4h1V7h1V6h1V5h1V7h1h1V9h1V8h1V6h1V8h1V7h1V5h1V7h1V10h1h1h1V7h1V6h1V7h1V11h1V13h1V10h1V8h1V11h1h1V8h1V9h1V8h1h1V7h1h1V6h1V4h1V7h1V9h1V7h1h1V10h1V9h1V5h1V6h1V9h1V11h1V12h1V11h1V8h1V10h1V9h1V7h1V6h1V9h1h1h1V5h1h1V9h1V6h1V3h1V4h1V8h1V9h1V11h1V12h1V8h1V7h1V8h1V9h1h1V8h1V6h1V4h1V3h1V4h1V7h1V9h1V6h1V4h1V6h1V9h1V11h1V7h1h1h1h1V9h1V8h1V9h1V8h1h1V7h1V5h1V6h1h1h1V5h1V10h1V11h1V7h1h1V5h1V3h1V4h1V3h1V4h1V8h1V9h1V11h1V13h1V14h1V12h1V9h1h1V7h1V4h1V8h1V10h1h1V12h1V13h1V11h1V8h1h1V9h1V7h1V8h1h1V6h1V9h1V10h1h1V15h1V13h1V6h1h1V9h1h1V6h1V7h1V8h1V10h1h1V8h1V3h1V2h1V4h1V6h1V8h1h1V7h1h1V11h1V14h1h1V10h1V7h1V6h1V8h1V14h1V15h1V13h1V9h1V6h1V5h1V12h1V17h1V16h1V10h1h1V8h1V7h1V10h1V8h1h1V6h1h1V8h1h1h1V11h1V13h1V11h1V9h1V8h1V7h1h1V5h1V7h1h1h1V8h1h1V9h1V8h1V9h1h1h1V7h1V6h1V177h-1V176h-1V174h-1h-1h-1V175h-1V174h-1V175h-1h-1V176h-1h-1h-1V178h-1V176h-1h-1V175h-1V174h-1V172h-1V170h-1V172h-1V175h-1h-1h-1V177h-1h-1V175h-1h-1V173h-1V176h-1V175h-1V173h-1h-1V167h-1V166h-1V171h-1V178h-1V177h-1V174h-1V170h-1V168h-1V169h-1V175h-1V177h-1V176h-1V173h-1V169h-1h-1V172h-1V176h-1h-1V175h-1h-1V177h-1V179h-1V181h-1V180h-1V175h-1V173h-1h-1V175h-1V176h-1V177h-1V174h-1h-1V177h-1h-1V170h-1V168h-1V173h-1h-1V174h-1V177h-1V175h-1h-1V176h-1V174h-1V175h-1h-1V172h-1V170h-1V171h-1V173h-1h-1V175h-1V179h-1V176h-1V174h-1h-1V171h-1V169h-1V170h-1V172h-1V174h-1V175h-1V179h-1V180h-1V179h-1V180h-1V178h-1V176h-1h-1V172h-1V173h-1V178h-1V177h-1h-1h-1V178h-1V176h-1V175h-1h-1V174h-1V175h-1V174h-1V176h-1h-1h-1h-1V172h-1V174h-1V177h-1V179h-1V177h-1V174h-1V176h-1V179h-1V180h-1V179h-1V177h-1V175h-1V174h-1h-1V175h-1V176h-1V175h-1V171h-1V172h-1V174h-1V175h-1V179h-1V180h-1V177h-1V174h-1V178h-1h-1V174h-1h-1h-1V177h-1V176h-1V174h-1V173h-1V175h-1V172h-1V171h-1V172h-1V174h-1V177h-1V178h-1V174h-1V173h-1V176h-1h-1V174h-1V176h-1V179h-1V177h-1V176h-1h-1V175h-1h-1V174h-1V175h-1V172h-1h-1V175h-1V173h-1V170h-1V172h-1V176h-1V177h-1V176h-1V173h-1h-1h-1V176h-1V178h-1V176h-1V175h-1V177h-1V175h-1V174h-1V176h-1h-1V178h-1V177h-1V176h-1V179h-1V177h-1V176h-1V177h-1V178h-1V176h-1h-1h-1V173h-1h-1h-1V176h-1V177h-1V176h-1V177h-1V178h-1V173h-1V169h-1V171h-1V172h-1V175h-1V176h-1V173h-1h-1V174h-1V176h-1V174h-1V176h-1V177h-1V175h-1V176h-1h-1V178h-1V181h-1h-1V179h-1V176h-1h-1V172h-1V171h-1V170h-1V173h-1V176h-1V173h-1h-1V174h-1V177h-1h-1V172h-1V173h-1V178h-1V180h-1V177h-1V174h-1V173h-1V176h-1V179h-1V177h-1h-1V176h-1h-1V177h-1V176h-1V179h-1V177h-1h-1V178h-1V176h-1V177h-1V178h-1V177h-1V173h-1h-1h-1V172h-1V175h-1V177h-1h-1h-1V178h-1h-1V179h-1V180h-1V178h-1V175h-1V177h-1h-1h-1h-1V175h-1h-1V179h-1h-1h-1V180h-1V178h-1h-1V176h-1V177h-1V180h-1V177h-1V176h-1V179h-1V178h-1V176h-1V177h-1h-1V178h-1V176h-1V174h-1V176h-1V178h-1V176h-1V174h-1V177h-1V178h-1V175h-1h-1h-1h-1V177h-1V178h-1V180h-1V181h-1V180h-1V178h-1V172h-1V173h-1V179h-1V178h-1V172h-1h-1V175h-1V176h-1V175h-1h-1V176h-1h-1V174h-1V172h-1V173h-1V171h-1V173h-1V179h-1V178h-1V177h-1V178h-1V175h-1V176h-1V177h-1h-1V178h-1V179h-1h-1h-1V175h-1V171h-1V174h-1h-1V176h-1h-1V178h-1V177h-1V169h-1V167h-1V169h-1V176h-1V175h-1V176h-1V177h-1V175h-1V178h-1V179h-1h-1V180h-1V174h-1V171h-1V174h-1V176h-1V177h-1h-1h-1V178h-1V179h-1V177h-1h-1V175h-1V170h-1V172h-1V178h-1V175h-1V177h-1V178h-1V177h-1V175h-1V173h-1V174h-1V176h-1V179h-1V178h-1V176h-1V178h-1V179h-1V176h-1V178h-1V177h-1V176h-1V177h-1V179h-1V175h-1V174h-1V177h-1V178h-1V172h-1V169h-1V175h-1V178h-1V176h-1V178h-1V181h-1V180h-1V176h-1V173h-1V172h-1V173h-1V176h-1V172h-1V171h-1h-1V172h-1V173h-1V168h-1V172h-1V176h-1V175h-1V178h-1V176h-1h-1V179h-1V177h-1h-1V178h-1V179h-1V177h-1h-1V181h-1h-1V179h-1V178h-1V179h-1V176h-1V175h-1h-1V177h-1V178h-1h-1V179h-1V180h-1V179h-1V171h-1V172h-1V176h-1V174h-1V176h-1V178h-1V179h-1V177h-1V176h-1h-1V177h-1h-1V178h-1V177h-1h-1h-1V175h-1V176h-1V179h-1V178h-1V177h-1V178h-1h-1h-1h-1V177h-1V178h-1V177h-1V174h-1V177h-1V179h-1V177h-1V173h-1V172h-1V173h-1V179h-1V181h-1V175h-1V177h-1V181h-1h-1h-1h-1V180h-1V177h-1h-1V178h-1V177h-1V175h-1h-1V177h-1V175h-1V178h-1V173h-1V172h-1V177h-1V173h-1h-1V174h-1V175h-1V176h-1h-1V177h-1V178h-1V173h-1h-1V179h-1V174h-1V172h-1V176h-1V178h-1V179h-1V178h-1V179h-1h-1V178h-1V177h-1V176h-1V178h-1V179h-1h-1h-1h-1V177h-1V176h-1V178h-1V177h-1V176h-1h-1V175h-1V177h-1V178h-1h-1V177h-1V179h-1h-1V176h-1V178h-1h-1V180h-1V173h-1V172h-1V177h-1V175h-1V177h-1h-1V176h-1V178h-1h-1h-1h-1V177h-1V175h-1h-1V176h-1V175h-1V176h-1V177h-1h-1V171h-1h-1V177h-1h-1V175h-1z"/></svg>
<div class="" style="left:161px;top:406px;width:681px;height:7px;background:#aaaaaa;border-top:1px solid #000;border-bottom:1px solid #000;"></div>
<div class="" style="left:130px;top:218px;width:1px;height:383px;background:#000;"></div>
<div class="" style="left:54px;top:584px;width:61px;height:17px;background:#c8c8d8;border:1px solid;border-color:#fff #8a8a98 #8a8a98 #fff;"></div>
<svg style="left:78px;top:588px" width="14" height="9" viewBox="0 0 14 9"><path d="M2.2 7.2 L7 2.4 L11.8 7.2 Z" fill="none" stroke="#000" stroke-width="1.2"/></svg>
<span id="t31" class="t " style="top:586px;height:16px;line-height:16px;left:135px;letter-spacing:0.438px;font-weight:bold;font-size:12px;">-1,0</span>
<div class="" style="left:157px;top:600px;width:3px;height:1px;background:#000;"></div>
<div class="" style="left:847px;top:213px;width:17px;height:392px;background:linear-gradient(90deg,#e6e6e6,#f3f3f3 4px,#f6f6f6);"></div>
<div class="" style="left:848px;top:231px;width:15px;height:328px;border:1px solid #979797;border-radius:2px;background:linear-gradient(90deg,#f6f6f6,#ebebee 45%,#d6d6dc 55%,#cdcdd4);box-shadow:inset 0 0 0 1px rgba(255,255,255,.7);"></div>
<div class="" style="left:852px;top:391px;width:7px;height:1px;background:#5a5a5a;"></div>
<div class="" style="left:852px;top:393px;width:7px;height:1px;background:#5a5a5a;"></div>
<div class="" style="left:852px;top:395px;width:7px;height:1px;background:#5a5a5a;"></div>
<div class="" style="left:852px;top:397px;width:7px;height:1px;background:#5a5a5a;"></div>
<div class="arr" style="left:852px;top:220px;border-top:none;border-bottom:4px solid #505050;"></div>
<div class="arr" style="left:852px;top:595px;border-top:4px solid #505050;"></div>
<div class="" style="left:166px;top:605px;width:681px;height:17px;background:linear-gradient(#e6e6e6,#f3f3f3 4px,#f6f6f6);"></div>
<div class="" style="left:185px;top:606px;width:342px;height:15px;border:1px solid #979797;border-radius:2px;background:linear-gradient(#f6f6f6,#ebebee 45%,#d6d6dc 55%,#cdcdd4);box-shadow:inset 0 0 0 1px rgba(255,255,255,.7);"></div>
<div class="" style="left:350px;top:610px;width:1px;height:7px;background:#5a5a5a;"></div>
<div class="" style="left:352px;top:610px;width:1px;height:7px;background:#5a5a5a;"></div>
<div class="" style="left:354px;top:610px;width:1px;height:7px;background:#5a5a5a;"></div>
<div class="" style="left:356px;top:610px;width:1px;height:7px;background:#5a5a5a;"></div>
<div style="left:171px;top:610px;width:0;height:0;border-top:4px solid transparent;border-bottom:4px solid transparent;border-right:4px solid #444;"></div>
<div style="left:837px;top:610px;width:0;height:0;border-top:4px solid transparent;border-bottom:4px solid transparent;border-left:4px solid #444;"></div>
<div class="" style="left:30px;top:622px;width:834px;height:1px;background:#a0a0a0;"></div>
<div class="" style="left:30px;top:623px;width:834px;height:1px;background:#fff;"></div>
<div class="" style="left:30px;top:626px;width:1px;height:51px;background:#a0a0a0;"></div>
<div class="" style="left:40px;top:626px;width:1px;height:51px;background:#a0a0a0;"></div>
<div class="" style="left:31px;top:626px;width:9px;height:51px;background:#f6f6f6;"></div>
<div class="" style="left:34px;top:628px;width:4px;height:1px;background:#8c8c8c;"></div>
<div class="" style="left:34px;top:629px;width:4px;height:1px;background:#fff;"></div>
<div class="" style="left:34px;top:632px;width:4px;height:1px;background:#8c8c8c;"></div>
<div class="" style="left:34px;top:633px;width:4px;height:1px;background:#fff;"></div>
<div class="" style="left:34px;top:636px;width:4px;height:1px;background:#8c8c8c;"></div>
<div class="" style="left:34px;top:637px;width:4px;height:1px;background:#fff;"></div>
<div class="" style="left:34px;top:640px;width:4px;height:1px;background:#8c8c8c;"></div>
<div class="" style="left:34px;top:641px;width:4px;height:1px;background:#fff;"></div>
<div class="" style="left:34px;top:644px;width:4px;height:1px;background:#8c8c8c;"></div>
<div class="" style="left:34px;top:645px;width:4px;height:1px;background:#fff;"></div>
<div class="" style="left:34px;top:648px;width:4px;height:1px;background:#8c8c8c;"></div>
<div class="" style="left:34px;top:649px;width:4px;height:1px;background:#fff;"></div>
<div class="" style="left:34px;top:652px;width:4px;height:1px;background:#8c8c8c;"></div>
<div class="" style="left:34px;top:653px;width:4px;height:1px;background:#fff;"></div>
<div class="" style="left:34px;top:656px;width:4px;height:1px;background:#8c8c8c;"></div>
<div class="" style="left:34px;top:657px;width:4px;height:1px;background:#fff;"></div>
<div class="" style="left:34px;top:660px;width:4px;height:1px;background:#8c8c8c;"></div>
<div class="" style="left:34px;top:661px;width:4px;height:1px;background:#fff;"></div>
<div class="" style="left:34px;top:664px;width:4px;height:1px;background:#8c8c8c;"></div>
<div class="" style="left:34px;top:665px;width:4px;height:1px;background:#fff;"></div>
<div class="" style="left:34px;top:668px;width:4px;height:1px;background:#8c8c8c;"></div>
<div class="" style="left:34px;top:669px;width:4px;height:1px;background:#fff;"></div>
<div class="" style="left:34px;top:672px;width:4px;height:1px;background:#8c8c8c;"></div>
<div class="" style="left:34px;top:673px;width:4px;height:1px;background:#fff;"></div>
<span id="t32" class="t " style="top:630px;height:16px;line-height:16px;left:42px;letter-spacing:0.235px;">Частота проекта (Гц):</span>
<div class="" style="left:43px;top:647px;width:79px;height:22px;background:#fff;border:1px solid #e3e3e3;"></div>
<span id="t33" class="t " style="top:652px;height:16px;line-height:16px;left:48px;">44100</span>
<div class="arr" style="left:109px;top:657px;"></div>
<div class="" style="left:170px;top:646px;width:1px;height:25px;background:#a0a0a0;"></div>
<div class="" style="left:171px;top:646px;width:1px;height:25px;background:#fff;"></div>
<span id="t34" class="t " style="top:630px;height:16px;line-height:16px;left:177px;letter-spacing:0.192px;">Snap To:</span>
<div class="combo" style="left:177px;top:647px;width:74px;height:23px;"></div>
<span id="t35" class="t " style="top:652px;height:16px;line-height:16px;left:182px;">Off</span>
<div class="arr" style="left:238px;top:657px;"></div>
<span id="t36" class="t " style="top:630px;height:16px;line-height:16px;left:257px;letter-spacing:0.202px;">Начало выделения:</span>
<div class="tc" style="left:257px;top:647px;width:149px;height:21px;"></div>
<div style="left:257px;top:647px;width:149px;height:21px;"><span class="t dg" style="left:4.6px;top:3px;height:16px;line-height:16px;">0</span><span class="t dg" style="left:14.7px;top:3px;height:16px;line-height:16px;">0</span><span class="t un" style="left:27px;top:3px;height:16px;line-height:16px;">ч</span><span class="t dg" style="left:39.4px;top:3px;height:16px;line-height:16px;">0</span><span class="t dg" style="left:49.3px;top:3px;height:16px;line-height:16px;">0</span><span class="t un" style="left:62px;top:3px;height:16px;line-height:16px;">м</span><span class="t dg" style="left:74.9px;top:3px;height:16px;line-height:16px;">0</span><span class="t dg" style="left:85px;top:3px;height:16px;line-height:16px;">0</span><span class="t dg" style="left:94.6px;top:3px;height:16px;line-height:16px;color:#000;">.</span><span class="t dg" style="left:99.6px;top:3px;height:16px;line-height:16px;">0</span><span class="t dg" style="left:109.3px;top:3px;height:16px;line-height:16px;">0</span><span class="t dg" style="left:119.2px;top:3px;height:16px;line-height:16px;">0</span><span class="t un" style="left:132.4px;top:3px;height:16px;line-height:16px;">с</span></div>
<div class="" style="left:396px;top:649px;width:9px;height:17px;background:#e6e6e6;border:1px solid;border-color:#fff #999 #999 #fff;"></div>
<div class="arr" style="left:397px;top:656px;border-left-width:3px;border-right-width:3px;border-top-width:4px;"></div>
<div class="tc" style="left:413px;top:647px;width:149px;height:21px;"></div>
<div style="left:413px;top:647px;width:149px;height:21px;"><span class="t dg" style="left:4.6px;top:3px;height:16px;line-height:16px;">0</span><span class="t dg" style="left:14.7px;top:3px;height:16px;line-height:16px;">0</span><span class="t un" style="left:27px;top:3px;height:16px;line-height:16px;">ч</span><span class="t dg" style="left:39.4px;top:3px;height:16px;line-height:16px;">0</span><span class="t dg" style="left:49.3px;top:3px;height:16px;line-height:16px;">1</span><span class="t un" style="left:62px;top:3px;height:16px;line-height:16px;">м</span><span class="t dg" style="left:74.9px;top:3px;height:16px;line-height:16px;">3</span><span class="t dg" style="left:85px;top:3px;height:16px;line-height:16px;">5</span><span class="t dg" style="left:94.6px;top:3px;height:16px;line-height:16px;color:#000;">.</span><span class="t dg" style="left:99.6px;top:3px;height:16px;line-height:16px;">0</span><span class="t dg" style="left:109.3px;top:3px;height:16px;line-height:16px;">3</span><span class="t dg" style="left:119.2px;top:3px;height:16px;line-height:16px;">3</span><span class="t un" style="left:132.4px;top:3px;height:16px;line-height:16px;">с</span></div>
<div class="" style="left:552px;top:649px;width:9px;height:17px;background:#e6e6e6;border:1px solid;border-color:#fff #999 #999 #fff;"></div>
<div class="arr" style="left:553px;top:656px;border-left-width:3px;border-right-width:3px;border-top-width:4px;"></div>
<div class="tc" style="left:585px;top:647px;width:149px;height:21px;"></div>
<div style="left:585px;top:647px;width:149px;height:21px;"><span class="t dg" style="left:4.6px;top:3px;height:16px;line-height:16px;">0</span><span class="t dg" style="left:14.7px;top:3px;height:16px;line-height:16px;">0</span><span class="t un" style="left:27px;top:3px;height:16px;line-height:16px;">ч</span><span class="t dg" style="left:39.4px;top:3px;height:16px;line-height:16px;">0</span><span class="t dg" style="left:49.3px;top:3px;height:16px;line-height:16px;">0</span><span class="t un" style="left:62px;top:3px;height:16px;line-height:16px;">м</span><span class="t dg" style="left:74.9px;top:3px;height:16px;line-height:16px;">0</span><span class="t dg" style="left:85px;top:3px;height:16px;line-height:16px;">0</span><span class="t dg" style="left:94.6px;top:3px;height:16px;line-height:16px;color:#000;">.</span><span class="t dg" style="left:99.6px;top:3px;height:16px;line-height:16px;">0</span><span class="t dg" style="left:109.3px;top:3px;height:16px;line-height:16px;">0</span><span class="t dg" style="left:119.2px;top:3px;height:16px;line-height:16px;">0</span><span class="t un" style="left:132.4px;top:3px;height:16px;line-height:16px;">с</span></div>
<div class="" style="left:724px;top:649px;width:9px;height:17px;background:#e6e6e6;border:1px solid;border-color:#fff #999 #999 #fff;"></div>
<div class="arr" style="left:725px;top:656px;border-left-width:3px;border-right-width:3px;border-top-width:4px;"></div>
<div style="left:413px;top:631px;width:13px;height:13px;border-radius:50%;border:1px solid #7a8590;background:radial-gradient(circle at 40% 35%,#fdfdfd,#dcdfe3 70%,#c4c9cf);"></div>
<div style="left:416px;top:634px;width:7px;height:7px;border-radius:50%;background:radial-gradient(circle at 35% 30%,#8fd0f4,#1f6fb4 60%,#103f78);"></div>
<span id="t37" class="t " style="top:630px;height:16px;line-height:16px;left:429px;letter-spacing:0.539px;">Конец</span>
<div style="left:472px;top:631px;width:13px;height:13px;border-radius:50%;border:1px solid #7a8590;background:radial-gradient(circle at 40% 35%,#fdfdfd,#dcdfe3 70%,#c4c9cf);"></div>
<span id="t38" class="t " style="top:630px;height:16px;line-height:16px;left:488px;letter-spacing:0.202px;">Длительность</span>
<div class="" style="left:577px;top:646px;width:1px;height:25px;background:#a0a0a0;"></div>
<div class="" style="left:578px;top:646px;width:1px;height:25px;background:#fff;"></div>
<span id="t39" class="t " style="top:630px;height:16px;line-height:16px;left:585px;letter-spacing:0.050px;">Текущая позиция:</span>
<div class="" style="left:30px;top:678px;width:834px;height:1px;background:#8e8e8e;"></div>
<div class="" style="left:30px;top:679px;width:834px;height:1px;background:#b2b2b2;"></div>
<div class="" style="left:30px;top:680px;width:834px;height:22px;background:#f0edec;border:1px solid #fff;"></div>
<div class="" style="left:585px;top:682px;width:1px;height:18px;background:#d5d2cf;"></div>
<div class="" style="left:586px;top:682px;width:1px;height:18px;background:#fff;"></div>
<svg style="left:852px;top:690px" width="11" height="11" viewBox="0 0 11 11"><g fill="#a9a6a3"><rect x="8" y="8" width="1.5" height="1.5"/><rect x="8" y="5" width="1.5" height="1.5"/><rect x="5" y="8" width="1.5" height="1.5"/><rect x="8" y="2" width="1.5" height="1.5"/><rect x="5" y="5" width="1.5" height="1.5"/><rect x="2" y="8" width="1.5" height="1.5"/></g></svg>
<div class="menu" style="left:31px;top:72px;width:367px;height:501px;"></div>
<div class="" style="left:59px;top:74px;width:1px;height:497px;background:#e2e3e3;"></div>
<div class="" style="left:60px;top:74px;width:1px;height:497px;background:#fff;"></div>
<span id="t40" class="t " style="top:77px;height:16px;line-height:16px;left:65px;letter-spacing:-0.180px;">Создать проект</span>
<span id="t41" class="t " style="top:77px;height:16px;line-height:16px;right:517px;letter-spacing:0.331px;">Ctrl+N</span>
<span id="t42" class="t " style="top:99px;height:16px;line-height:16px;left:65px;letter-spacing:-0.127px;">Открыть...</span>
<span id="t43" class="t " style="top:99px;height:16px;line-height:16px;right:517px;letter-spacing:0.197px;">Ctrl+O</span>
<span id="t44" class="t " style="top:121px;height:16px;line-height:16px;left:65px;letter-spacing:-0.257px;">Недавние файлы</span>
<div style="left:382px;top:125px;width:0;height:0;border-top:4px solid transparent;border-bottom:4px solid transparent;border-left:4px solid #000;"></div>
<div class="sep" style="left:62px;top:144px;width:334px;height:2px;"></div>
<span id="t45" class="t " style="top:151px;height:16px;line-height:16px;left:65px;letter-spacing:-0.036px;">Закрыть</span>
<span id="t46" class="t " style="top:151px;height:16px;line-height:16px;right:517px;letter-spacing:0.200px;">Ctrl+W</span>
<span id="t47" class="t " style="top:173px;height:16px;line-height:16px;left:65px;letter-spacing:-0.092px;">Сохранить проект</span>
<span id="t48" class="t " style="top:173px;height:16px;line-height:16px;right:517px;letter-spacing:-0.138px;">Ctrl+S</span>
<span id="t49" class="t " style="top:195px;height:16px;line-height:16px;left:65px;letter-spacing:-0.097px;">Сохранить проект как...</span>
<span id="t50" class="t " style="top:217px;height:16px;line-height:16px;left:65px;letter-spacing:-0.001px;">Сохранить сжатую копию проекта...</span>
<span id="t51" class="t " style="top:239px;height:16px;line-height:16px;left:65px;letter-spacing:-0.062px;">Проверить зависимости...</span>
<div class="sep" style="left:62px;top:262px;width:334px;height:2px;"></div>
<span id="t52" class="t " style="top:269px;height:16px;line-height:16px;left:65px;letter-spacing:-0.136px;">Edit Metadata...</span>
<div class="sep" style="left:62px;top:292px;width:334px;height:2px;"></div>
<span id="t53" class="t " style="top:299px;height:16px;line-height:16px;left:65px;letter-spacing:0.133px;">Импортировать</span>
<div style="left:382px;top:303px;width:0;height:0;border-top:4px solid transparent;border-bottom:4px solid transparent;border-left:4px solid #000;"></div>
<div class="sep" style="left:62px;top:322px;width:334px;height:2px;"></div>
<span id="t54" class="t " style="top:329px;height:16px;line-height:16px;left:65px;letter-spacing:-0.075px;">Export Audio...</span>
<span id="t55" class="t " style="top:329px;height:16px;line-height:16px;right:517px;letter-spacing:0.027px;">Ctrl+Shift+E</span>
<span id="t56" class="t " style="top:351px;height:16px;line-height:16px;left:65px;letter-spacing:-0.178px;">Export Selected Audio...</span>
<span id="t57" class="t dis" style="top:373px;height:16px;line-height:16px;left:65px;letter-spacing:-0.001px;">Экспортировать пометки...</span>
<span id="t58" class="t " style="top:395px;height:16px;line-height:16px;left:65px;letter-spacing:-0.079px;">Экспортировать в несколько файлов...</span>
<span id="t59" class="t " style="top:395px;height:16px;line-height:16px;right:517px;letter-spacing:0.057px;">Ctrl+Shift+L</span>
<span id="t60" class="t dis" style="top:417px;height:16px;line-height:16px;left:65px;letter-spacing:-0.105px;">Экспортировать MIDI...</span>
<div class="sep" style="left:62px;top:440px;width:334px;height:2px;"></div>
<span id="t61" class="t " style="top:447px;height:16px;line-height:16px;left:65px;letter-spacing:0.152px;">Применить цепочку...</span>
<span id="t62" class="t " style="top:469px;height:16px;line-height:16px;left:65px;letter-spacing:0.056px;">Изменить цепочки...</span>
<div class="sep" style="left:62px;top:492px;width:334px;height:2px;"></div>
<span id="t63" class="t " style="top:499px;height:16px;line-height:16px;left:65px;letter-spacing:-0.049px;">Параметры страницы...</span>
<span id="t64" class="t " style="top:521px;height:16px;line-height:16px;left:65px;letter-spacing:-0.164px;">Печать...</span>
<div class="sep" style="left:62px;top:544px;width:334px;height:2px;"></div>
<span id="t65" class="t " style="top:551px;height:16px;line-height:16px;left:65px;letter-spacing:-0.477px;">Выход</span>
<span id="t66" class="t " style="top:551px;height:16px;line-height:16px;right:517px;letter-spacing:0.197px;">Ctrl+Q</span>
<svg style="left:16.2px;top:35.6px" width="70.4" height="53.4" viewBox="0 0 70.4 53.4"><defs><filter id="rb26" x="-20%" y="-20%" width="140%" height="140%"><feGaussianBlur stdDeviation="1.6"/></filter></defs><rect x="12.65" y="13.25" width="47.1" height="30.1" rx="6.35" fill="none" stroke="#000" stroke-opacity=".55" stroke-width="4.8" filter="url(#rb26)"/><rect x="11.65" y="11.65" width="47.1" height="30.1" rx="6.35" fill="none" stroke="#fff" stroke-width="5.7"/><rect x="11.65" y="11.65" width="47.1" height="30.1" rx="6.35" fill="none" stroke="#f4060e" stroke-width="3.3"/></svg>
<svg style="left:42.8px;top:311.9px" width="124.2" height="48.1" viewBox="0 0 124.2 48.1"><defs><filter id="rb52" x="-20%" y="-20%" width="140%" height="140%"><feGaussianBlur stdDeviation="1.6"/></filter></defs><rect x="12.65" y="13.25" width="100.9" height="24.8" rx="6.35" fill="none" stroke="#000" stroke-opacity=".55" stroke-width="4.8" filter="url(#rb52)"/><rect x="11.65" y="11.65" width="100.9" height="24.8" rx="6.35" fill="none" stroke="#fff" stroke-width="5.7"/><rect x="11.65" y="11.65" width="100.9" height="24.8" rx="6.35" fill="none" stroke="#f4060e" stroke-width="3.3"/></svg>
</body></html>
